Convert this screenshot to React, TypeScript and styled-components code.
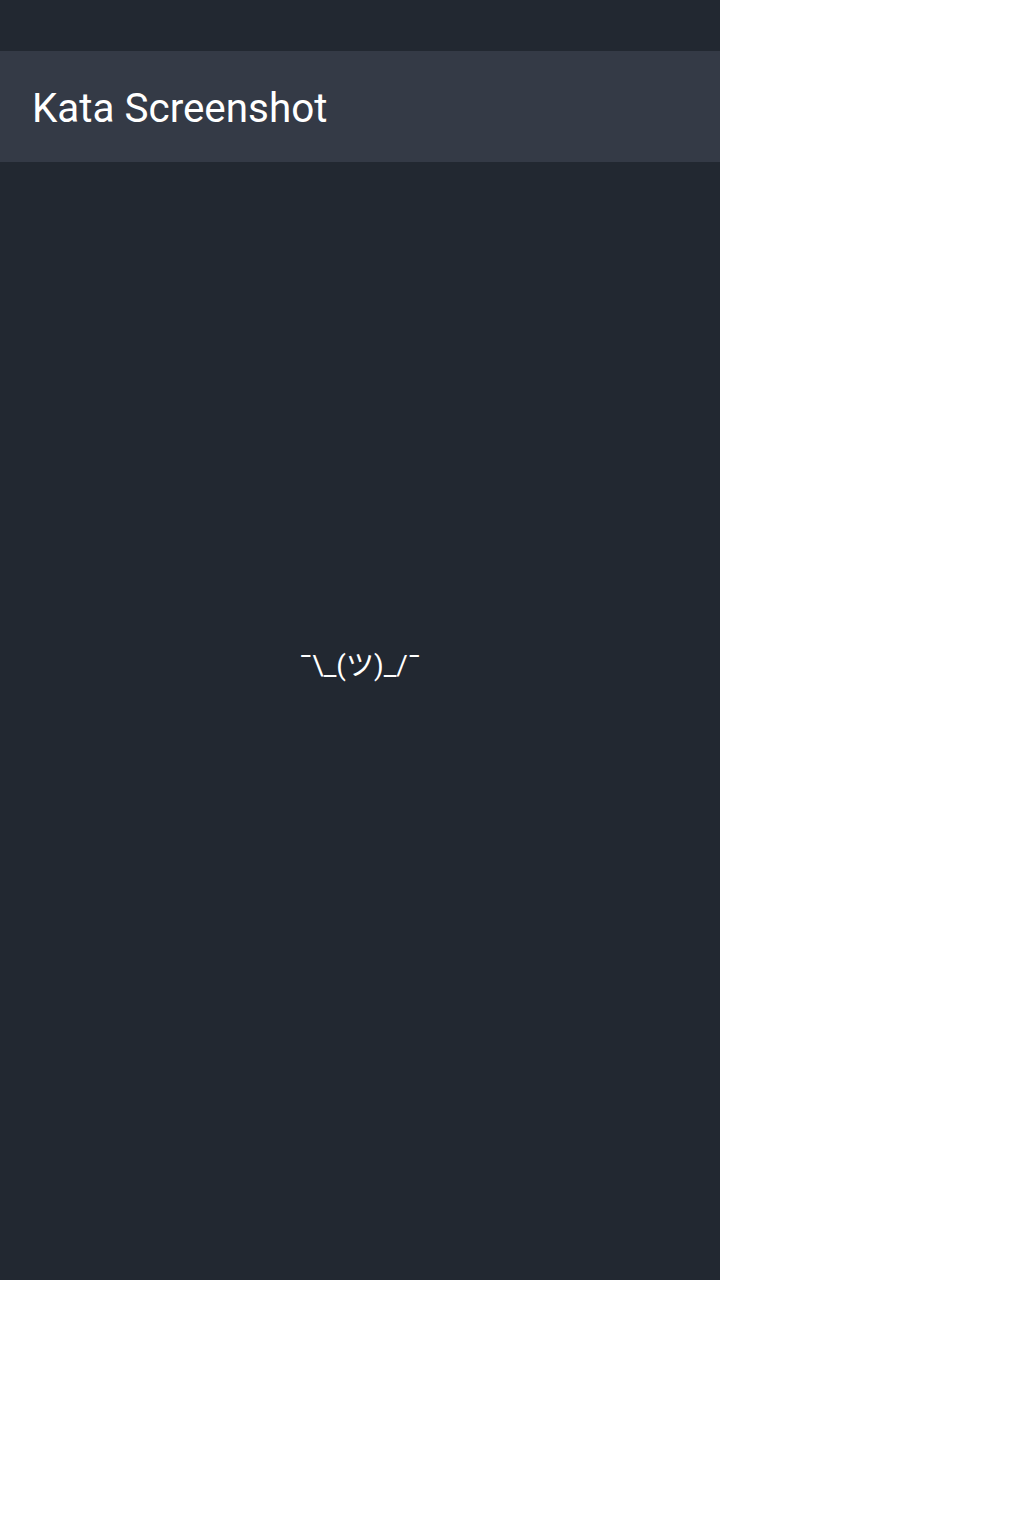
import React from "react";
import styled, { createGlobalStyle } from "styled-components";

const Global = createGlobalStyle`
  html, body { margin: 0; padding: 0; background: #ffffff; }
  body { font-family: Roboto, "Noto Sans CJK JP", sans-serif; }
`;

const Screen = styled.div`
  width: 720px;
  height: 1280px;
  background: #222831;
  display: flex;
  flex-direction: column;
`;

const StatusBar = styled.div`
  height: 51px;
  flex: none;
`;

const Header = styled.header`
  height: 111px;
  flex: none;
  box-sizing: border-box;
  background: #343a46;
  display: flex;
  align-items: center;
  padding: 4px 0 0 32px;
`;

const Title = styled.h1`
  margin: 0;
  font-family: Roboto, sans-serif;
  font-weight: 400;
  font-size: 40.4px;
  color: #ffffff;
`;

const Body = styled.main`
  flex: 1;
  display: flex;
  align-items: center;
  justify-content: center;
`;

const Shrug = styled.div`
  font-family: Roboto, "Noto Sans CJK JP", sans-serif;
  font-size: 28px;
  color: #ffffff;
  margin-bottom: 116px;
`;

export default function App() {
  return (
    <>
      <Global />
      <Screen>
        <StatusBar />
        <Header>
          <Title>Kata Screenshot</Title>
        </Header>
        <Body>
          <Shrug>¯\_(ツ)_/¯</Shrug>
        </Body>
      </Screen>
    </>
  );
}
